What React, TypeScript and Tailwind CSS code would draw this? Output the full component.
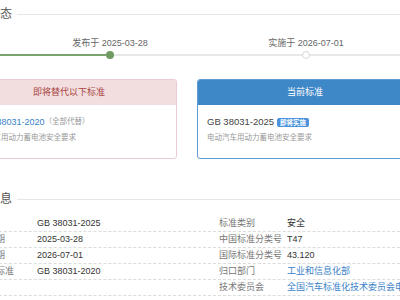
import { ReactNode } from "react";

const font = { fontFamily: '"Liberation Sans", "Noto Sans CJK SC", sans-serif' };

function SectionTitle({ children }: { children: ReactNode }) {
  return (
    <div className="flex items-center">
      <span className="pl-[4px] text-[12px] leading-[16px] text-[#555]">{children}</span>
      <div className="ml-[5px] h-px flex-1 bg-[#e6e6e6]" />
    </div>
  );
}

function Node({ label, done }: { label: string; done?: boolean }) {
  return (
    <div className="flex w-[8px] flex-col items-center">
      <div className="whitespace-nowrap text-[9px] leading-[12px] text-[#666]">{label}</div>
      <div
        className={
          done
            ? "mt-[2px] h-[8px] w-[8px] rounded-full bg-[#6f9a62]"
            : "mt-[2px] h-[8px] w-[8px] rounded-full border border-[#d6d6d6] bg-white"
        }
      />
    </div>
  );
}

type Cell = { label: string; value: string; link?: boolean };

const rows: [Cell | null, Cell][] = [
  [{ label: "标准号", value: "GB 38031-2025" }, { label: "标准类别", value: "安全" }],
  [{ label: "发布日期", value: "2025-03-28" }, { label: "中国标准分类号", value: "T47" }],
  [{ label: "实施日期", value: "2026-07-01" }, { label: "国际标准分类号", value: "43.120" }],
  [{ label: "被代替标准", value: "GB 38031-2020" }, { label: "归口部门", value: "工业和信息化部", link: true }],
  [null, { label: "技术委员会", value: "全国汽车标准化技术委员会电动车辆分技术委员会", link: true }],
];

function InfoCell({ cell }: { cell: Cell | null }) {
  return (
    <div className="flex w-[250px] shrink-0 items-center whitespace-nowrap">
      {cell && (
        <>
          <span className="w-[68px] shrink-0 text-[#777]">{cell.label}</span>
          <span className={cell.link ? "text-[#3a7fc6]" : "text-[#333]"}>{cell.value}</span>
        </>
      )}
    </div>
  );
}

export default function App() {
  return (
    <div className="h-[300px] w-[400px] overflow-hidden bg-white" style={font}>
      <div className="ml-[-40px] w-[480px] pt-[6px]">
        <SectionTitle>标准状态</SectionTitle>

        <div className="mt-[15px] flex">
          <div className="mb-[3px] h-[2px] w-[146px] self-end bg-[#7ba36d]" />
          <Node label="发布于 2025-03-28" done />
          <div className="mb-[3px] h-[2px] w-[188px] self-end bg-[#e8e8e8]" />
          <Node label="实施于 2026-07-01" />
          <div className="mb-[3px] h-[2px] flex-1 self-end bg-[#e8e8e8]" />
        </div>

        <div className="mt-[20px] flex gap-[20px] pl-[1px]">
          <div className="w-[216px] shrink-0 overflow-hidden rounded-[3px] border border-[#ebccd1]">
            <div className="flex h-[25px] items-center justify-center bg-[#f2dede] text-[9px] text-[#a94442]">
              即将替代以下标准
            </div>
            <div className="h-[53px] px-[9px] pt-[11px]">
              <div className="flex items-center pl-[10px] leading-[12px]">
                <span className="text-[9px] text-[#3a7fc6]">GB 38031-2020</span>
                <span className="text-[7.5px] text-[#999]">（全部代替）</span>
              </div>
              <div className="mt-[5px] text-[7.5px] leading-[10px] text-[#999]">电动汽车用动力蓄电池安全要求</div>
            </div>
          </div>

          <div className="w-[216px] shrink-0 overflow-hidden rounded-[3px] border border-[#5e9ad6]">
            <div className="flex h-[25px] items-center justify-center bg-[#3f88c8] text-[9px] text-white">
              当前标准
            </div>
            <div className="h-[53px] px-[9px] pt-[11px]">
              <div className="flex items-center leading-[12px]">
                <span className="text-[9.5px] text-[#444]">GB 38031-2025</span>
                <span className="ml-[3px] rounded-[2px] bg-[#4a93dc] px-[3px] text-[6.5px] font-bold leading-[9px] text-white">
                  即将实施
                </span>
              </div>
              <div className="mt-[5px] text-[7.5px] leading-[10px] text-[#999]">电动汽车用动力蓄电池安全要求</div>
            </div>
          </div>
        </div>

        <div className="mt-[32px]">
          <SectionTitle>基本信息</SectionTitle>
        </div>

        <div className="ml-[9px] mt-[9px] text-[9px]">
          {rows.map(([l, r], i) => (
            <div key={i} className="flex h-[16px] border-b border-dashed border-[#dcdcdc]">
              <InfoCell cell={l} />
              <InfoCell cell={r} />
            </div>
          ))}
        </div>
      </div>
    </div>
  );
}
